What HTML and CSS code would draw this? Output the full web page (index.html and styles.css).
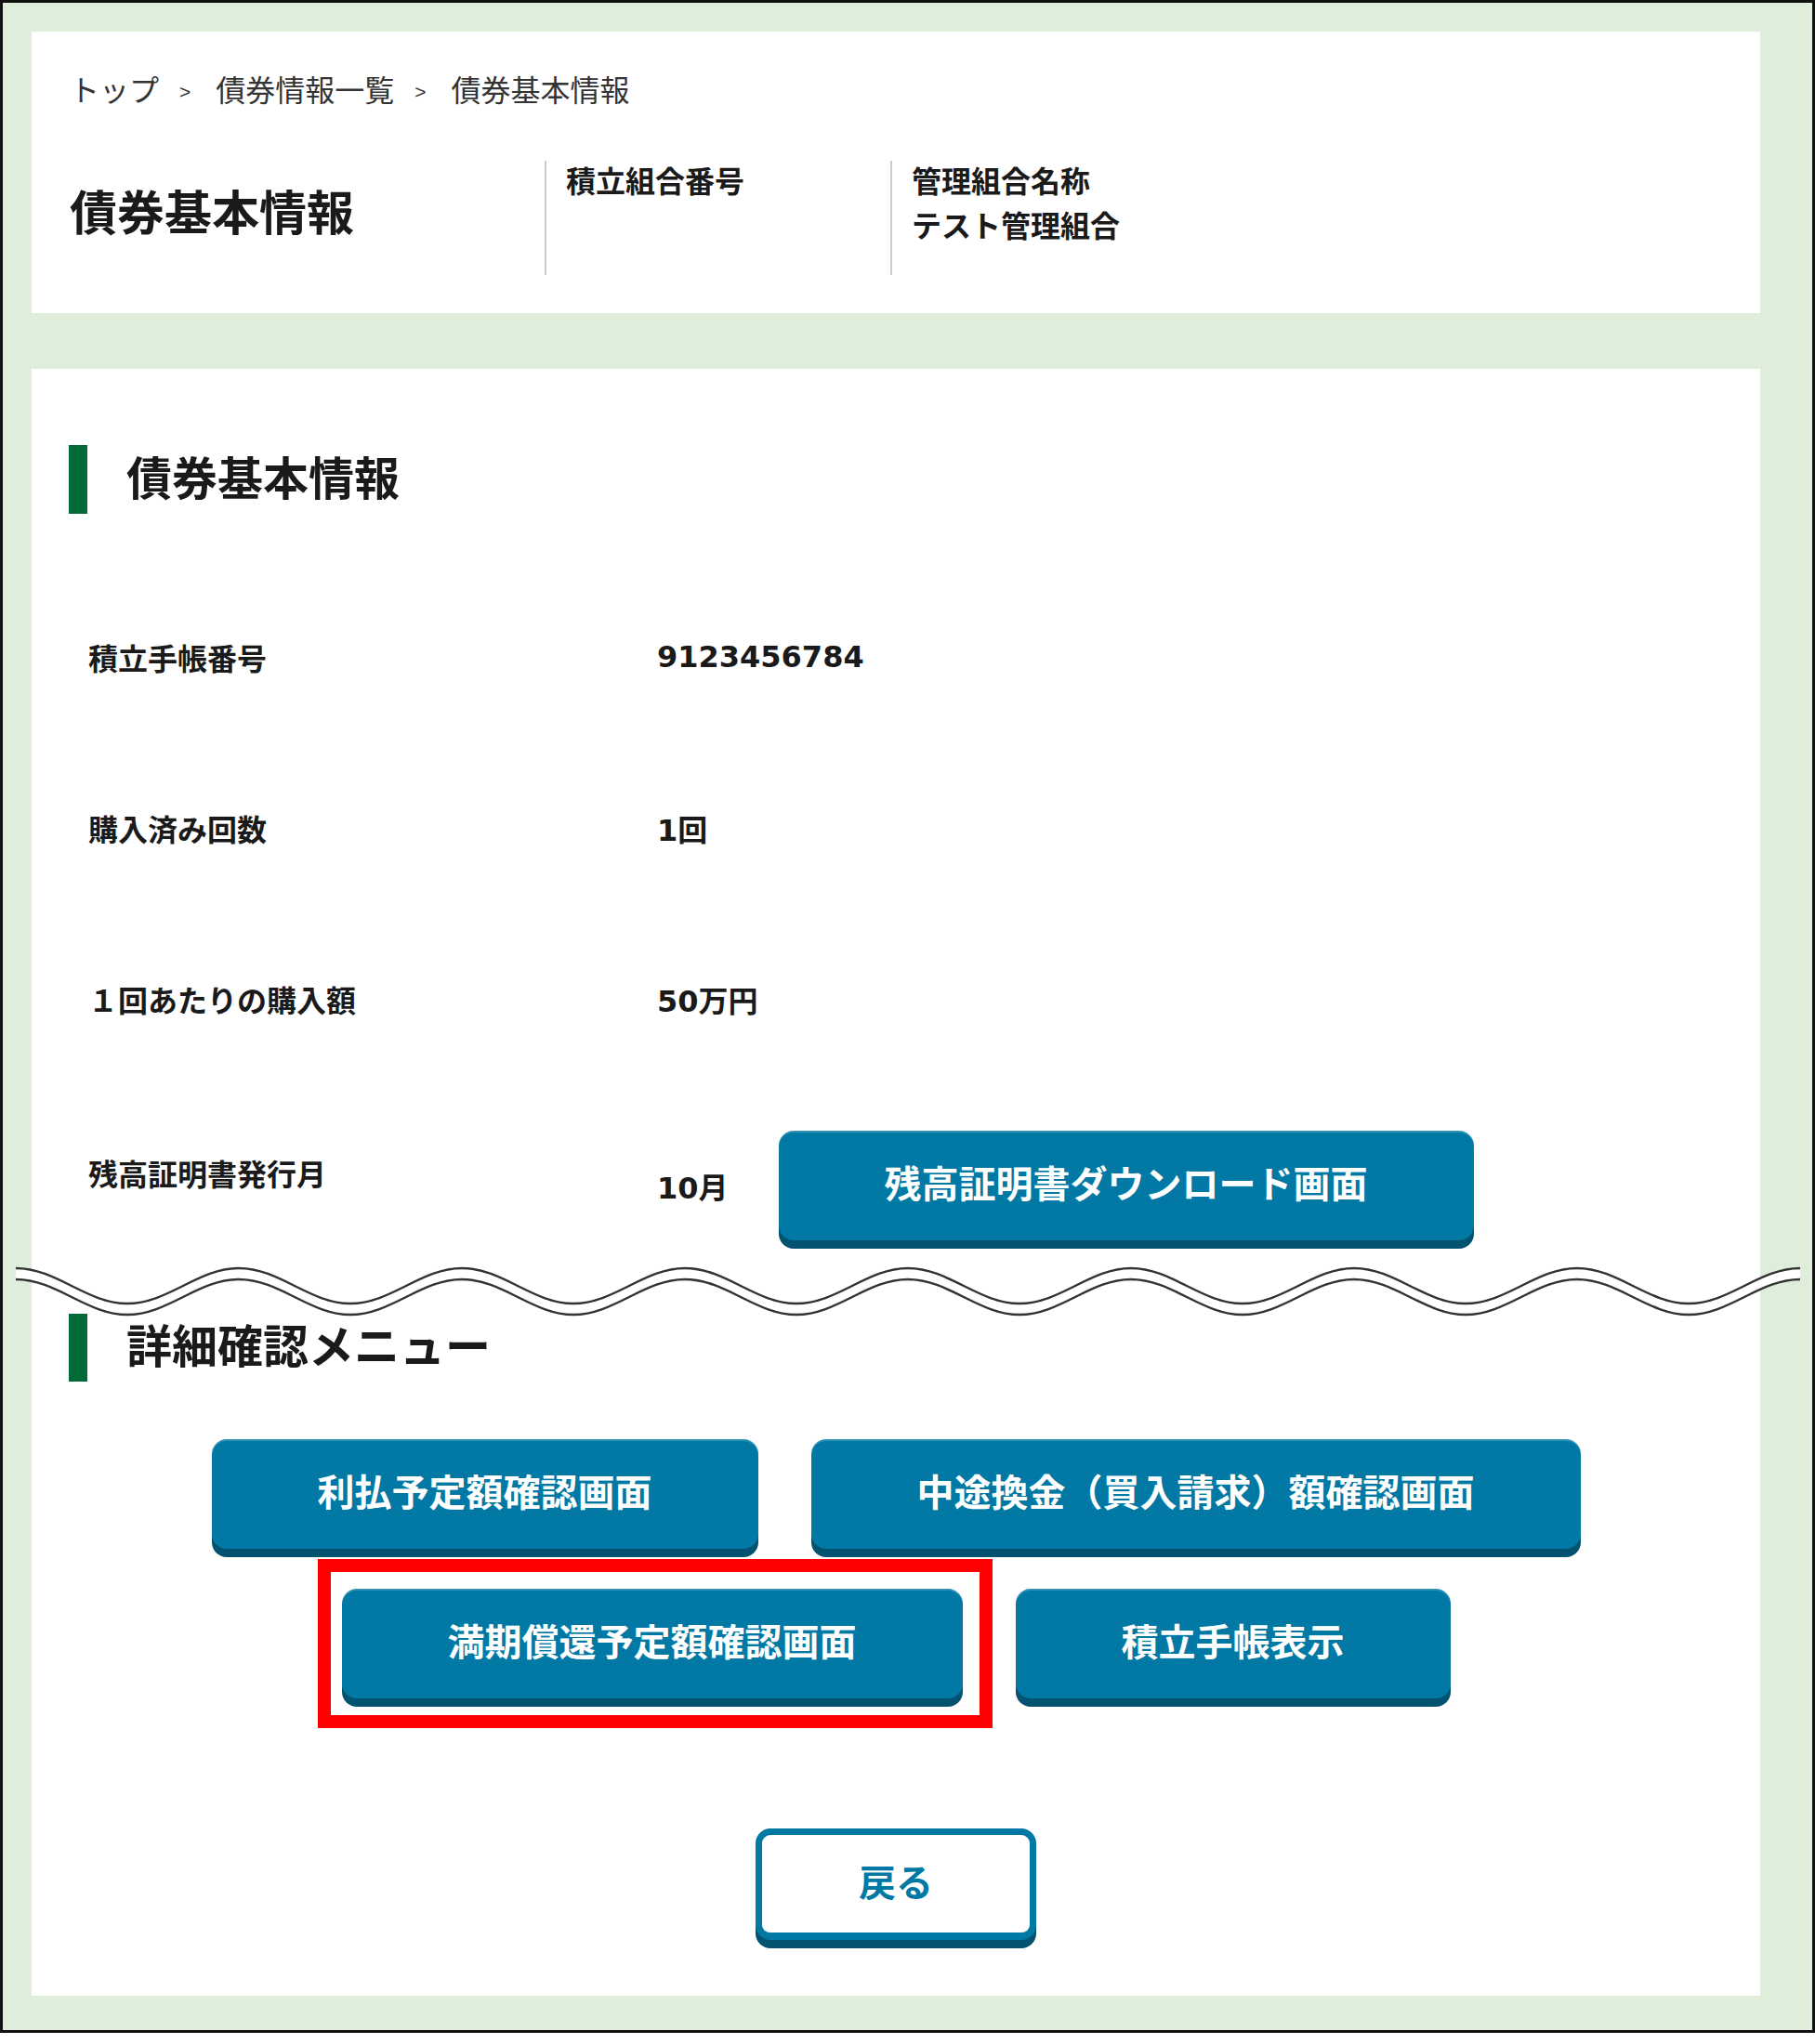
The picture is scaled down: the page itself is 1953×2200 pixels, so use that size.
FILE: index.html
```html
<!DOCTYPE html>
<html lang="ja">
<head>
<meta charset="utf-8">
<title>債券基本情報</title>
<link rel="stylesheet" href="styles.css">
</head>
<body>
<div class="frame">
  <section class="card head-card">
    <nav class="crumbs">
      <span>トップ</span><span class="sep">&gt;</span><span>債券情報一覧</span><span class="sep">&gt;</span><span>債券基本情報</span>
    </nav>
    <div class="head-row">
      <h1 class="page-title">債券基本情報</h1>
      <div class="meta meta-id">
        <div>積立組合番号</div>
      </div>
      <div class="meta">
        <div>管理組合名称</div>
        <div>テスト管理組合</div>
      </div>
    </div>
  </section>

  <section class="card main-card">
    <h2 class="sec-title"><span>債券基本情報</span></h2>
    <dl class="info">
      <div class="info-row"><dt>積立手帳番号</dt><dd>9123456784</dd></div>
      <div class="info-row"><dt>購入済み回数</dt><dd>1回</dd></div>
      <div class="info-row"><dt>１回あたりの購入額</dt><dd>50万円</dd></div>
      <div class="info-row cert"><dt>残高証明書発行月</dt><dd><span>10月</span><button class="btn" type="button">残高証明書ダウンロード画面</button></dd></div>
    </dl>

    <h2 class="sec-title menu-title"><span>詳細確認メニュー</span></h2>
    <div class="menu">
      <div class="menu-row">
        <button class="btn" type="button">利払予定額確認画面</button>
        <button class="btn" type="button">中途換金（買入請求）額確認画面</button>
      </div>
      <div class="menu-row">
        <button class="btn marked" type="button">満期償還予定額確認画面</button>
        <button class="btn" type="button">積立手帳表示</button>
      </div>
    </div>

    <div class="back-wrap">
      <button class="btn-back" type="button">戻る</button>
    </div>
  </section>

  <svg class="wave" viewBox="0 0 1920 60" xmlns="http://www.w3.org/2000/svg" aria-hidden="true">
    <path class="wave-band" d="M0 4 C44 4 76 42 120 42 S196 4 240 4 S316 42 360 42 S436 4 480 4 S556 42 600 42 S676 4 720 4 S796 42 840 42 S916 4 960 4 S1036 42 1080 42 S1156 4 1200 4 S1276 42 1320 42 S1396 4 1440 4 S1516 42 1560 42 S1636 4 1680 4 S1756 42 1800 42 S1876 4 1920 4 L1920 16 C1876 16 1844 54 1800 54 S1724 16 1680 16 S1604 54 1560 54 S1484 16 1440 16 S1364 54 1320 54 S1244 16 1200 16 S1124 54 1080 54 S1004 16 960 16 S884 54 840 54 S764 16 720 16 S644 54 600 54 S524 16 480 16 S404 54 360 54 S284 16 240 16 S164 54 120 54 S44 16 0 16 Z"/>
    <path class="wave-line" d="M0 4 C44 4 76 42 120 42 S196 4 240 4 S316 42 360 42 S436 4 480 4 S556 42 600 42 S676 4 720 4 S796 42 840 42 S916 4 960 4 S1036 42 1080 42 S1156 4 1200 4 S1276 42 1320 42 S1396 4 1440 4 S1516 42 1560 42 S1636 4 1680 4 S1756 42 1800 42 S1876 4 1920 4"/>
    <path class="wave-line" d="M0 16 C44 16 76 54 120 54 S196 16 240 16 S316 54 360 54 S436 16 480 16 S556 54 600 54 S676 16 720 16 S796 54 840 54 S916 16 960 16 S1036 54 1080 54 S1156 16 1200 16 S1276 54 1320 54 S1396 16 1440 16 S1516 54 1560 54 S1636 16 1680 16 S1756 54 1800 54 S1876 16 1920 16"/>
  </svg>
</div>
</body>
</html>
```

FILE: styles.css
```css
* {
  box-sizing: border-box;
}

html,
body {
  margin: 0;
  padding: 0;
  background: #ffffff;
}

body {
  width: 1953px;
  font-family: "DejaVu Sans", "Noto Sans CJK JP", sans-serif;
  color: #1a1a1a;
}

.frame {
  position: relative;
  width: 1953px;
  border: 3px solid #111111;
  background: #deeedb;
  padding: 31px 56px 37px 31px;
}

.card {
  background: #ffffff;
}

/* ---------- header card ---------- */
.head-card {
  height: 303px;
  margin-bottom: 60px;
  padding: 41px 0 0 41px;
}

.crumbs {
  display: flex;
  align-items: center;
  height: 40px;
  font-family: "Noto Sans CJK JP", sans-serif;
  font-size: 32px;
  font-weight: 400;
  line-height: 40px;
  color: #333333;
}

.sep {
  font-family: "Liberation Sans", sans-serif;
  font-size: 21px;
  margin: 8px 27px 0 22px;
}

.head-row {
  display: flex;
  height: 123px;
  margin-top: 58px;
}

.page-title {
  width: 511px;
  margin: 0;
  align-self: center;
  padding-bottom: 17px;
  font-family: "Noto Sans CJK JP", sans-serif;
  font-size: 51px;
  font-weight: 700;
  line-height: 1;
  color: #1a1a1a;
}

.meta {
  border-left: 2px solid #cccccc;
  padding-left: 21px;
  font-family: "Noto Sans CJK JP", sans-serif;
  font-size: 32px;
  font-weight: 700;
  line-height: 48px;
}

.meta > :first-child {
  margin-top: -4px;
}

.meta-id {
  width: 372px;
}

/* ---------- main card ---------- */
.main-card {
  height: 1751px;
  padding-top: 82px;
}

.sec-title {
  display: flex;
  align-items: center;
  gap: 42px;
  height: 74px;
  margin: 0 0 0 40px;
  font-family: "Noto Sans CJK JP", sans-serif;
  font-size: 49px;
  font-weight: 700;
  line-height: 1;
  color: #1a1a1a;
}

.sec-title::before {
  content: "";
  width: 20px;
  height: 100%;
  background: #006b36;
}

.sec-title span {
  margin-bottom: 10px;
}

.menu-title {
  height: 73px;
  margin-top: 53px;
}

.info {
  margin: 66px 0 0;
  padding-left: 61px;
}

.info-row {
  display: flex;
  align-items: center;
  height: 184px;
  padding-bottom: 8px;
  font-size: 32px;
  font-weight: 700;
}

.info-row dt {
  width: 612px;
}

.info-row dd {
  margin: 0;
  display: flex;
  align-items: center;
  gap: 54px;
}

.info-row.cert {
  height: 190px;
}

.info-row.cert dd {
  padding-top: 28px;
}

.btn {
  height: 118px;
  padding: 0 114px 8px;
  border: 0;
  border-radius: 16px;
  background: #0179a4;
  box-shadow: 0 9px 0 #03526f, inset 0 2px 0 rgba(255, 255, 255, 0.18);
  color: #ffffff;
  font-family: "Noto Sans CJK JP", sans-serif;
  font-size: 40px;
  font-weight: 700;
  line-height: 1;
  white-space: nowrap;
  cursor: pointer;
}

.menu {
  display: flex;
  flex-direction: column;
  align-items: center;
  gap: 43px;
  margin-top: 62px;
}

.menu-row {
  display: flex;
  justify-content: center;
  gap: 57px;
}

.marked {
  position: relative;
}

.marked::after {
  content: "";
  position: absolute;
  left: -26px;
  top: -32px;
  right: -32px;
  bottom: -32px;
  border: 14px solid #ff0000;
  pointer-events: none;
}

.back-wrap {
  display: flex;
  justify-content: center;
  margin-top: 140px;
}

.btn-back {
  width: 302px;
  height: 120px;
  padding: 0 0 8px;
  border: 7px solid #0179a4;
  border-bottom-width: 8px;
  border-radius: 16px;
  background: #ffffff;
  box-shadow: 0 9px 0 #03526f;
  color: #0179a4;
  font-family: "Noto Sans CJK JP", sans-serif;
  font-size: 40px;
  font-weight: 700;
  line-height: 1;
  cursor: pointer;
}

/* ---------- cut-line wave overlay ---------- */
.wave {
  position: absolute;
  left: 14px;
  top: 1358px;
  width: 1920px;
  height: 60px;
  overflow: visible;
}

.wave-band {
  fill: #ffffff;
}

.wave-line {
  fill: none;
  stroke: #333333;
  stroke-width: 2.5;
}
```
